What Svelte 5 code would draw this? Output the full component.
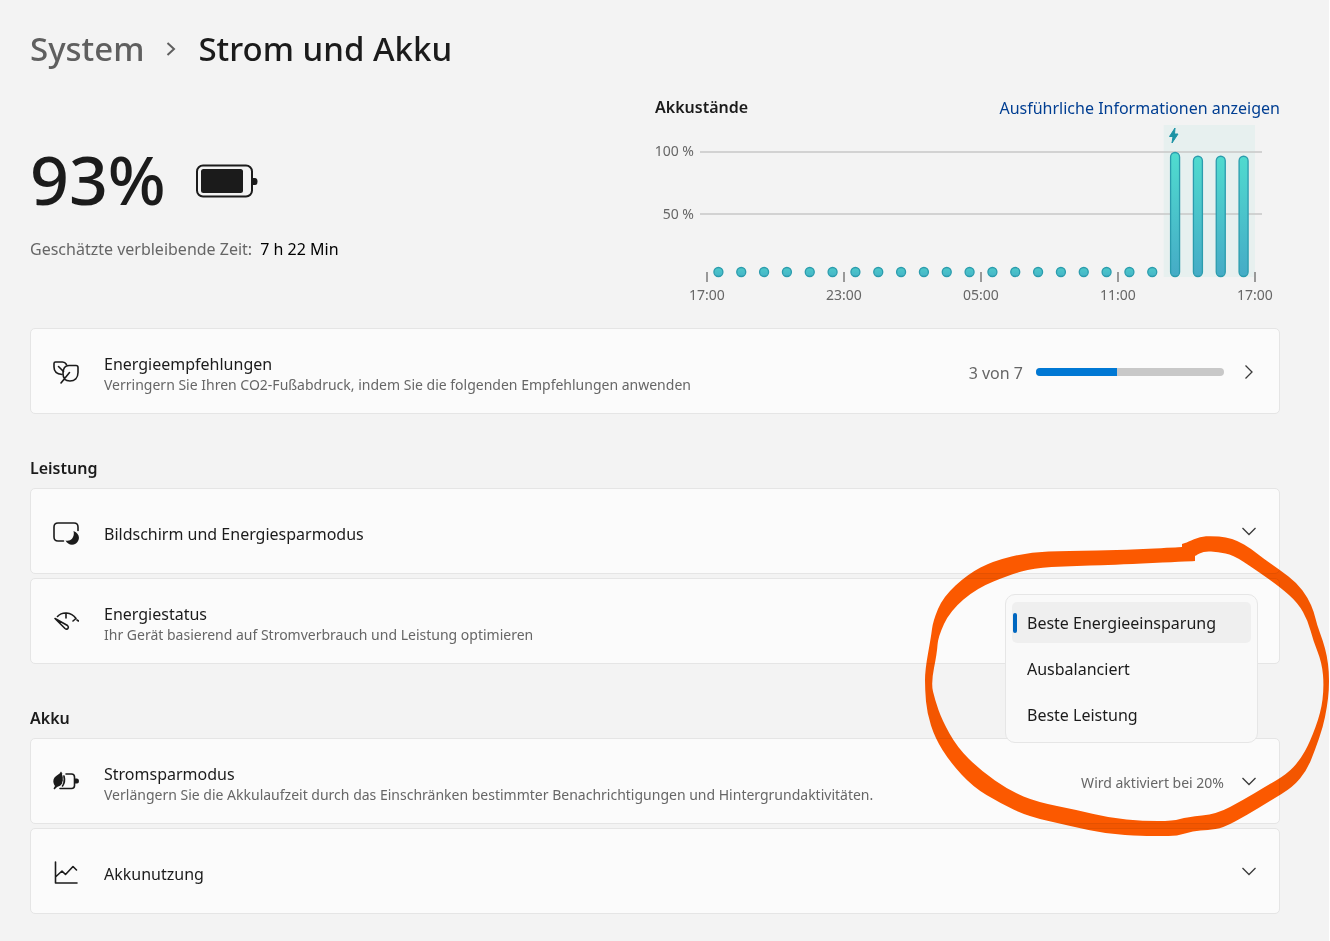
<script>
  let mode = $state('Beste Energieeinsparung');
  let open = $state(true);

  const modes = ['Beste Energieeinsparung', 'Ausbalanciert', 'Beste Leistung'];
  const levels = [...Array(20).fill(0), 100, 97, 97, 97];
  const times = ['17:00', '23:00', '05:00', '11:00', '17:00'];

  // plot area of the chart
  const left = 52;
  const base = 152;
  const step = 548 / 24;

  const barHeight = (level) => Math.max(10, level * 1.25);

  // pen marking, outer and inner edge (a point given twice is a corner)
  const outer = [
    [1182, 544], [1182, 544], [1188, 542], [1200, 536.5], [1212, 536], [1226, 537], [1238, 541], [1250, 548],
    [1264, 559], [1280, 570], [1297, 583], [1308, 598], [1314, 612], [1317, 625], [1323, 641], [1327, 656],
    [1329, 672], [1329, 690], [1327, 707], [1323, 727], [1315, 750], [1307, 770], [1293, 787], [1270, 801],
    [1247, 815], [1223, 828], [1208, 830], [1193, 831], [1177, 836], [1160, 836], [1143, 836], [1107, 834],
    [1070, 826], [1027, 816], [1000, 803], [973, 787], [950, 762], [935, 738], [927, 713], [925, 690],
    [925, 670], [931, 637], [933, 621], [943, 597], [968, 574], [993, 561], [1030, 552], [1067, 551],
    [1127, 550], [1182, 547], [1182, 547]
  ];
  const inner = [
    [1195, 561], [1195, 561], [1195, 556], [1195, 556], [1204, 551], [1218, 552], [1233, 555], [1253, 568],
    [1280, 587], [1298, 603], [1308, 621], [1313, 640], [1322, 663], [1324, 687], [1321, 712], [1310, 742],
    [1300, 760], [1287, 774], [1265, 787], [1243, 800], [1217, 814], [1187, 817], [1173, 821], [1143, 821],
    [1110, 818], [1077, 810], [1037, 802], [1010, 791], [980, 770], [957, 747], [942, 720], [935, 700],
    [931, 683], [937, 653], [938, 637], [950, 611], [977, 588], [1010, 575], [1033, 568], [1070, 566],
    [1110, 565]
  ];

  // closed curve through the midpoints of a list of points
  const curve = (pts) => {
    const mid = (a, b) => `${(a[0] + b[0]) / 2} ${(a[1] + b[1]) / 2}`;
    let d = 'M' + mid(pts[pts.length - 1], pts[0]);
    pts.forEach((p, i) => {
      d += `Q${p[0]} ${p[1]} ${mid(p, pts[(i + 1) % pts.length])}`;
    });
    return d + 'z';
  };

  const choose = (m) => {
    mode = m;
    open = false;
  };
</script>

{#snippet down()}
  <svg class="chevron" viewBox="0 0 16 16"><path d="M1.5 4 8 10.5l6.5-6.500" /></svg>
{/snippet}

<main>
  <nav>
    <a href="#system">System</a>
    <svg class="crumb" viewBox="0 0 12 16"><path d="M2.5 2 9 8l-6.500 6" /></svg>
    <h1>Strom und Akku</h1>
  </nav>

  <section class="hero">
    <div class="status">
      <div class="charge">
        <span class="percent">93%</span>
        <svg class="battery" viewBox="0 0 62 34">
          <rect x="1" y="1.500" width="55" height="31" rx="6" fill="none" stroke="#1b1b1b" stroke-width="2" />
          <rect x="5" y="5" width="42" height="24" rx="2.500" fill="#1b1b1b" />
          <path d="M57 14h2q2.500 0 2.500 3.500T59 21h-2z" fill="#1b1b1b" />
        </svg>
      </div>
      <p>Geschätzte verbleibende Zeit: <b>7 h 22 Min</b></p>
    </div>

    <div class="levels">
      <div class="levels-head">
        <h2>Akkustände</h2>
        <a href="#details">Ausführliche Informationen anzeigen</a>
      </div>
      <svg class="chart" viewBox="0 0 625 182">
        <defs>
          <linearGradient id="bar" gradientUnits="userSpaceOnUse" x1="0" y1="27" x2="0" y2="152">
            <stop offset="0" stop-color="#50dccf" />
            <stop offset="1" stop-color="#45abc6" />
          </linearGradient>
          <linearGradient id="dot" x1="0" y1="0" x2="0" y2="1">
            <stop offset="0" stop-color="#4cc9c9" />
            <stop offset="1" stop-color="#46b4c8" />
          </linearGradient>
        </defs>
        <rect x={left + 20 * step} y="0" width={4 * step} height={base} fill="#e7f0ef" />
        <path d="M45 27h562M45 89h562" stroke="#c8c8c8" stroke-width="1.500" />
        <text x="39" y="31" text-anchor="end">100 %</text>
        <text x="39" y="94" text-anchor="end">50 %</text>
        {#each levels as level, i}
          <rect
            x={left + (i + 0.5) * step - 4.5}
            y={base - barHeight(level) + 0.5}
            width="9"
            height={barHeight(level) - 1}
            rx="4.500"
            fill={level ? 'url(#bar)' : 'url(#dot)'}
            stroke="#2b9cad"
            stroke-width="1.300"
          />
        {/each}
        {#each times as time, i}
          <rect x={left + i * 6 * step - 1} y="147" width="2" height="10" fill="#999" />
          <text x={left + i * 6 * step} y="175" text-anchor="middle">{time}</text>
        {/each}
        <path d="M520 3l-5.500 8.500h3.500l-1 6.500 6-9h-3.500z" fill="#1c93a5" stroke="#1c93a5" />
      </svg>
    </div>
  </section>

  <a class="card" href="#empfehlungen">
    <svg class="icon" viewBox="0 0 26 26">
      <path d="M9 14.500C3.500 14 1 11 1 7V3.500Q1 2 2.500 2H9.500Q12 2 13.500 4.500M5.500 6.500l5 5" />
      <path d="M16 5.500H23Q25 5.500 25 7.500V12.500C25 18 21.500 21 17 21C12.500 21 10 18 10 13.500C10 8.500 12 5.500 16 5.500zM8 23l8.500-10.500" />
    </svg>
    <span class="text">
      <span class="title">Energieempfehlungen</span>
      <span class="sub">Verringern Sie Ihren CO2-Fußabdruck, indem Sie die folgenden Empfehlungen anwenden</span>
    </span>
    <label class="count" for="tips">3 von 7</label>
    <progress id="tips" value="3" max="7"></progress>
    <svg class="chevron" viewBox="0 0 16 16"><path d="M4.500 1.500 11 8l-6.500 6.500" /></svg>
  </a>

  <h2 class="group">Leistung</h2>
  <div class="cards">
    <button class="card">
      <svg class="icon" viewBox="0 0 26 26">
        <path d="M10.500 21H5Q1 21 1 17V7Q1 3 5 3H21Q25 3 25 7V10.500" />
        <path class="solid" d="M20.500 11C27 13.500 27.500 20 23 23.500C19 26 14.500 24.500 12.500 20.500C18 22 22 17 20.500 11z" />
      </svg>
      <span class="text"><span class="title">Bildschirm und Energiesparmodus</span></span>
      {@render down()}
    </button>

    <div class="card">
      <svg class="icon" viewBox="0 0 26 26">
        <path d="M4.500 6.500C9 1.500 18 1.500 23 8.500M13 3v5M20 11l3-2.500M24 10l1.500 1" />
        <path d="M2 8.500 14.500 15.500C16.500 17.500 14.500 20.500 12 18.500z" />
      </svg>
      <span class="text">
        <span class="title">Energiestatus</span>
        <span class="sub">Ihr Gerät basierend auf Stromverbrauch und Leistung optimieren</span>
      </span>
      <div class="dropdown">
        {#if open}
          <div class="menu" role="listbox" aria-label="Energiestatus">
            {#each modes as m}
              <button role="option" aria-selected={m === mode} class:selected={m === mode} onclick={() => choose(m)}>{m}</button>
            {/each}
          </div>
        {:else}
          <button class="current" onclick={() => (open = true)}>{mode}</button>
        {/if}
      </div>
    </div>
  </div>

  <h2 class="group">Akku</h2>
  <div class="cards">
    <button class="card">
      <svg class="icon" viewBox="0 0 26 26">
        <path d="M13 4H18.500Q21.500 4 21.500 7V15.500Q21.500 18.500 18.500 18.500H7" />
        <path class="solid" d="M22 8.500h2q2 0 2 2.500t-2 2.500h-2z" />
        <path class="solid" d="M8 1.500C11.500 6 12.500 11 9 14.500C7 16.500 4.500 16 3.500 17.500L1.500 19.500L0.500 18.500L2 16C-1.500 11 1 7 4.500 5Q7 3.500 8 1.500z" />
        <path class="cut" d="M9.500 4Q12 11 8 16" />
        <path d="M11 6Q12.500 12 9.500 16" />
      </svg>
      <span class="text">
        <span class="title">Stromsparmodus</span>
        <span class="sub">Verlängern Sie die Akkulaufzeit durch das Einschränken bestimmter Benachrichtigungen und Hintergrundaktivitäten.</span>
      </span>
      <span class="sub state">Wird aktiviert bei 20%</span>
      {@render down()}
    </button>

    <button class="card">
      <svg class="icon" viewBox="0 0 26 26">
        <path d="M2.500 2V23H24M3 16.500 9 11l3.500 3.500L20 6.500l3.500 3.500" />
      </svg>
      <span class="text"><span class="title">Akkunutzung</span></span>
      {@render down()}
    </button>
  </div>

  <svg class="marking" viewBox="925 536 404 301">
    <path d={curve(outer) + curve(inner)} />
  </svg>
</main>

<style>
  :global(body) {
    margin: 0;
    background: #f3f3f3;
  }

  main {
    position: relative;
    min-height: 100vh;
    box-sizing: border-box;
    padding: 24px 49px 24px 30px;
    border-right: 1px solid #fff;
    font-family: "Segoe UI", "Noto Sans", "Open Sans", sans-serif;
    font-size: 16px;
    color: #1b1b1b;
  }

  a {
    text-decoration: none;
  }

  nav {
    display: flex;
    align-items: center;
    gap: 21px;
    font-size: 33px;
    font-weight: 500;
    line-height: 50px;
  }

  nav a {
    color: #5f5f5f;
  }

  h1 {
    margin: 0;
    font-size: 33px;
    font-weight: 500;
  }

  h2 {
    margin: 0;
    font-size: 16px;
    font-weight: 600;
    line-height: 24px;
  }

  .crumb {
    width: 12px;
    height: 16px;
    fill: none;
    stroke: #5f5f5f;
    stroke-width: 2;
  }

  .hero {
    display: grid;
    grid-template-columns: 1fr 1fr;
    padding-top: 21px;
  }

  .status {
    padding-top: 42px;
  }

  .charge {
    display: flex;
    align-items: center;
    gap: 30px;
    height: 88px;
  }

  .percent {
    padding-bottom: 4px;
    font-size: 68px;
    font-weight: 500;
    line-height: 88px;
  }

  .battery {
    width: 62px;
    height: 34px;
  }

  .status p {
    display: flex;
    gap: 8px;
    margin: 12px 0 0;
    line-height: 24px;
    color: #666;
  }

  .status b {
    font-weight: 400;
    color: #000;
  }

  .levels-head {
    display: flex;
    justify-content: space-between;
  }

  .levels-head a {
    color: #003e92;
    line-height: 26px;
  }

  .chart {
    display: block;
    width: 100%;
    margin-top: 4px;
  }

  .chart text {
    font-size: 14px;
    fill: #666;
  }

  .card {
    display: flex;
    align-items: center;
    width: 100%;
    height: 86px;
    box-sizing: border-box;
    padding: 0 21px;
    background: #fbfbfb;
    border: 1px solid #e5e5e5;
    border-radius: 5px;
    color: #1b1b1b;
    font: inherit;
    text-align: left;
  }

  .hero + .card {
    margin-top: 21px;
  }

  .cards {
    display: flex;
    flex-direction: column;
    gap: 4px;
  }

  .group {
    padding: 42px 0 8px;
  }

  .icon {
    flex: none;
    width: 26px;
    height: 26px;
    margin: 3px 25px 0 1px;
    fill: none;
    stroke: #1b1b1b;
    stroke-width: 1.6;
    stroke-linecap: round;
    stroke-linejoin: round;
  }

  .icon .solid {
    fill: #1b1b1b;
    stroke: none;
  }

  .icon .cut {
    stroke: #fbfbfb;
    stroke-width: 1;
  }

  .text {
    display: flex;
    flex-direction: column;
    flex: 1;
    padding-top: 6px;
  }

  .title {
    line-height: 22px;
  }

  .sub {
    font-size: 14px;
    line-height: 20px;
    color: #666;
  }

  .state,
  .count {
    padding-top: 3px;
  }

  .count {
    color: #666;
  }

  progress {
    appearance: none;
    width: 188px;
    height: 8px;
    margin: 2px 0 0 13px;
    border: none;
    border-radius: 4px;
    overflow: hidden;
  }

  progress::-webkit-progress-bar {
    background: #c8c8c8;
  }

  progress::-webkit-progress-value {
    background: #0078d4;
  }

  .chevron {
    flex: none;
    width: 16px;
    height: 16px;
    margin: 1px 1px 0 17px;
    fill: none;
    stroke: #3a3a3a;
    stroke-width: 1.3;
  }

  .dropdown {
    position: relative;
    width: 253px;
    height: 40px;
  }

  .current {
    width: 100%;
    height: 40px;
    padding: 0 20px;
    background: #fbfbfb;
    border: 1px solid #d6d6d6;
    border-radius: 5px;
    font: inherit;
    text-align: left;
  }

  .menu {
    position: absolute;
    top: -7px;
    left: 0;
    z-index: 1;
    display: flex;
    flex-direction: column;
    gap: 5px;
    width: 100%;
    box-sizing: border-box;
    padding: 7px 6px;
    background: #f9f9f9;
    border: 1px solid #e6e6e6;
    border-radius: 10px;
  }

  .menu button {
    display: flex;
    align-items: center;
    height: 41px;
    padding: 0 11px 0 14px;
    background: none;
    border: none;
    border-radius: 5px;
    color: #1b1b1b;
    font: inherit;
  }

  .menu button::before {
    content: "";
    width: 4px;
    height: 20px;
    margin: 0 10px 0 -13px;
    border-radius: 2px;
  }

  .menu .selected {
    background: #efefef;
  }

  .menu .selected::before {
    background: #0067c0;
  }

  .marking {
    position: absolute;
    top: 536px;
    right: 0;
    z-index: 2;
    width: 404px;
    height: 301px;
    fill: #ff5a00;
    fill-rule: evenodd;
    mix-blend-mode: multiply;
    pointer-events: none;
  }
</style>
